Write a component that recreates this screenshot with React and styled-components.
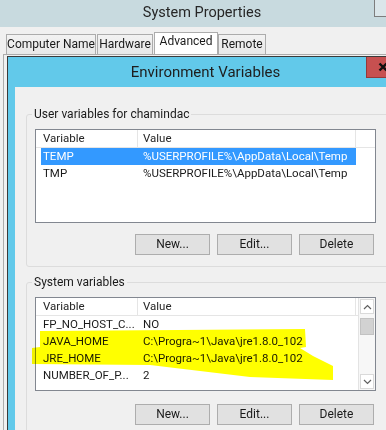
import React from "react";
import styled, { createGlobalStyle } from "styled-components";

const Global = createGlobalStyle`
  html, body { margin: 0; padding: 0; }
  body {
    width: 386px;
    height: 430px;
    overflow: hidden;
    background: #f0f0f0;
    font-family: Roboto, "Liberation Sans", sans-serif;
    color: #1a1a1a;
  }
  #root { width: 386px; height: 430px; overflow: hidden; }
`;

const Screen = styled.div`
  width: 386px;
  height: 430px;
  display: flex;
  flex-direction: column;
  overflow: hidden;
`;

const TitleBar = styled.div`
  height: 27px;
  flex-shrink: 0;
  background: #c8dadf;
  display: flex;
  align-items: flex-start;
`;

const Title = styled.div`
  flex: 1;
  text-align: center;
  font-size: 14.5px;
  line-height: 26px;
  padding-left: 30px;
  color: #262626;
`;

const CtrlStub = styled.div`
  width: 11px;
  height: 16px;
  border: 1px solid #7d7d7d;
  border-top: none;
  border-right: none;
  background: #dbe6ea;
`;

const TabStrip = styled.div`
  display: flex;
  align-items: flex-end;
  padding: 0 0 0 6px;
  height: 27px;
  flex-shrink: 0;
`;

const Tab = styled.div`
  box-sizing: border-box;
  width: ${(p) => p.$w}px;
  height: ${(p) => (p.$active ? 22 : 20)}px;
  margin-right: ${(p) => (p.$active ? 0 : 1)}px;
  border: 1px solid #acacac;
  border-bottom: none;
  background: ${(p) => (p.$active ? "#ffffff" : "linear-gradient(#f2f2f2, #e8e8e8)")};
  font-size: 12px;
  line-height: ${(p) => (p.$active ? 17 : 19)}px;
  text-align: center;
  color: #1a1a1a;
  white-space: nowrap;
`;

const TabPanel = styled.div`
  flex: 1;
  margin-left: 3px;
  border-left: 1px solid #acacac;
  border-top: 1px solid #acacac;
  padding: 1px 0 0 3px;
  display: flex;
  min-height: 0;
`;

const EnvWindow = styled.div`
  width: 420px;
  flex-shrink: 0;
  border: 1px solid #3a3a3a;
  border-right: none;
  border-bottom: none;
  background: #62c9ea;
  display: flex;
  flex-direction: column;
`;

const WinTitleBar = styled.div`
  height: 30px;
  display: flex;
  align-items: flex-start;
  flex-shrink: 0;
`;

const WinTitle = styled.div`
  flex: 1;
  text-align: center;
  font-size: 15px;
  line-height: 30px;
  padding-left: 37px;
  color: #1e1e1e;
`;

const CloseBtn = styled.div`
  width: 34px;
  height: 21px;
  box-sizing: border-box;
  background: #c75050;
  border: 1px solid #96393a;
  border-top: none;
  display: flex;
  align-items: center;
  justify-content: center;
  margin-right: 28px;
`;

const WinBody = styled.div`
  flex: 1;
  margin-left: 7px;
  background: #f0f0f0;
  padding: 19px 0 0 11px;
  display: flex;
  flex-direction: column;
  gap: 7px;
`;

const Group = styled.fieldset`
  margin: 0;
  width: 370px;
  box-sizing: border-box;
  border: 1px solid #dcdcdc;
  border-radius: 3px;
  padding: 0 0 11px 8px;
`;

const Legend = styled.legend`
  font-size: 12px;
  line-height: 16px;
  padding: 0 2px;
  margin-left: -3px;
  color: #1a1a1a;
`;

const ListBox = styled.div`
  position: relative;
  margin-top: 7px;
  width: 341px;
  height: 94px;
  box-sizing: border-box;
  border: 1px solid #828790;
  background: #ffffff;
  display: flex;
`;

const ListMain = styled.div`
  flex: 1;
  display: flex;
  flex-direction: column;
`;

const HeaderRow = styled.div`
  display: flex;
  height: 17px;
  border-bottom: 1px solid #e5e5e5;
  font-size: 11.5px;
  line-height: 17px;
  color: #262626;
`;

const HeaderCell = styled.div`
  box-sizing: border-box;
  width: ${(p) => p.$w}px;
  padding-left: ${(p) => p.$pad}px;
  border-right: 1px solid #e5e5e5;
  white-space: nowrap;
  overflow: hidden;
`;

const Row = styled.div`
  display: grid;
  grid-template-columns: 97px 1fr;
  margin-left: 5px;
  width: 315px;
  height: 17px;
  font-size: 11.5px;
  line-height: 17px;
  background: ${(p) => (p.$selected ? "#3399ff" : "transparent")};
  color: ${(p) => (p.$selected ? "#ffffff" : "#1a1a1a")};
`;

const Cell = styled.div`
  padding-left: ${(p) => p.$pad}px;
  white-space: nowrap;
  overflow: hidden;
`;

const Scrollbar = styled.div`
  width: 17px;
  flex-shrink: 0;
  border-left: 1px solid #e3e3e3;
  background: #f7f7f7;
  display: flex;
  flex-direction: column;
  padding: 1px;
  box-sizing: border-box;
`;

const ArrowBtn = styled.div`
  height: 15px;
  box-sizing: border-box;
  border: 1px solid #dadada;
  background: #ffffff;
  display: flex;
  align-items: center;
  justify-content: center;
`;

const Thumb = styled.div`
  margin-top: 4px;
  height: 17px;
  box-sizing: border-box;
  border: 1px solid #c2c2c2;
  background: #d2d2d2;
`;

const Track = styled.div`
  flex: 1;
`;

const ButtonRow = styled.div`
  width: 339px;
  display: flex;
  justify-content: flex-end;
  gap: 7px;
  margin-top: ${(p) => p.$top}px;
`;

const Button = styled.div`
  width: 75px;
  height: 21px;
  box-sizing: border-box;
  border: 1px solid #adadad;
  background: #e1e1e1;
  font-size: 12px;
  line-height: 19px;
  text-align: center;
  color: #1a1a1a;
`;

const Highlight = styled.svg`
  position: absolute;
  left: -8px;
  top: -1px;
  width: 360px;
  height: 100px;
  pointer-events: none;
  mix-blend-mode: multiply;
  overflow: visible;
`;

const Chevron = ({ up }) => (
  <svg width="9" height="6" viewBox="0 0 9 6">
    <path
      d={up ? "M1 5 L4.5 1.5 L8 5" : "M1 1 L4.5 4.5 L8 1"}
      fill="none"
      stroke="#606060"
      strokeWidth="1.2"
    />
  </svg>
);

const Buttons = ({ top }) => (
  <ButtonRow $top={top}>
    <Button>New...</Button>
    <Button>Edit...</Button>
    <Button>Delete</Button>
  </ButtonRow>
);

const userVars = [
  { name: "TEMP", value: "%USERPROFILE%\\AppData\\Local\\Temp", selected: true },
  { name: "TMP", value: "%USERPROFILE%\\AppData\\Local\\Temp" },
];

const sysVars = [
  { name: "FP_NO_HOST_C...", value: "NO" },
  { name: "JAVA_HOME", value: "C:\\Progra~1\\Java\\jre1.8.0_102" },
  { name: "JRE_HOME", value: "C:\\Progra~1\\Java\\jre1.8.0_102" },
  { name: "NUMBER_OF_P...", value: "2" },
];

const Header = () => (
  <HeaderRow>
    <HeaderCell $w={102} $pad={7}>Variable</HeaderCell>
    <HeaderCell $w={218} $pad={5}>Value</HeaderCell>
  </HeaderRow>
);

export default function App() {
  return (
    <Screen>
      <Global />
      <TitleBar>
        <Title>System Properties</Title>
        <CtrlStub />
      </TitleBar>
      <TabStrip>
        <Tab $w={90}>Computer Name</Tab>
        <Tab $w={56}>Hardware</Tab>
        <Tab $w={64} $active>Advanced</Tab>
        <Tab $w={48}>Remote</Tab>
      </TabStrip>
      <TabPanel>
        <EnvWindow>
          <WinTitleBar>
            <WinTitle>Environment Variables</WinTitle>
            <CloseBtn>
              <svg width="10" height="10" viewBox="0 0 10 10">
                <path d="M1.5 1.5 L8.5 8.5 M8.5 1.5 L1.5 8.5" stroke="#111" strokeWidth="2.4" />
              </svg>
            </CloseBtn>
          </WinTitleBar>
          <WinBody>
            <Group>
              <Legend>User variables for chamindac</Legend>
              <ListBox>
                <ListMain>
                  <Header />
                  {userVars.map((v) => (
                    <Row key={v.name} $selected={v.selected}>
                      <Cell $pad={2}>{v.name}</Cell>
                      <Cell $pad={5}>{v.value}</Cell>
                    </Row>
                  ))}
                </ListMain>
              </ListBox>
              <Buttons top={11} />
            </Group>
            <Group>
              <Legend>System variables</Legend>
              <ListBox>
                <ListMain>
                  <Header />
                  {sysVars.map((v) => (
                    <Row key={v.name}>
                      <Cell $pad={2}>{v.name}</Cell>
                      <Cell $pad={5}>{v.value}</Cell>
                    </Row>
                  ))}
                </ListMain>
                <Scrollbar>
                  <ArrowBtn><Chevron up /></ArrowBtn>
                  <Thumb />
                  <Track />
                  <ArrowBtn><Chevron /></ArrowBtn>
                </Scrollbar>
                <Highlight viewBox="0 0 360 100">
                  <polygon
                    fill="#ffff00"
                    points="12,34 150,33 277,32 278,50 272,51 285,59 305,69 305,83 222,80 122,68 4,67 4,51 12,50"
                  />
                </Highlight>
              </ListBox>
              <Buttons top={13} />
            </Group>
          </WinBody>
        </EnvWindow>
      </TabPanel>
    </Screen>
  );
}
